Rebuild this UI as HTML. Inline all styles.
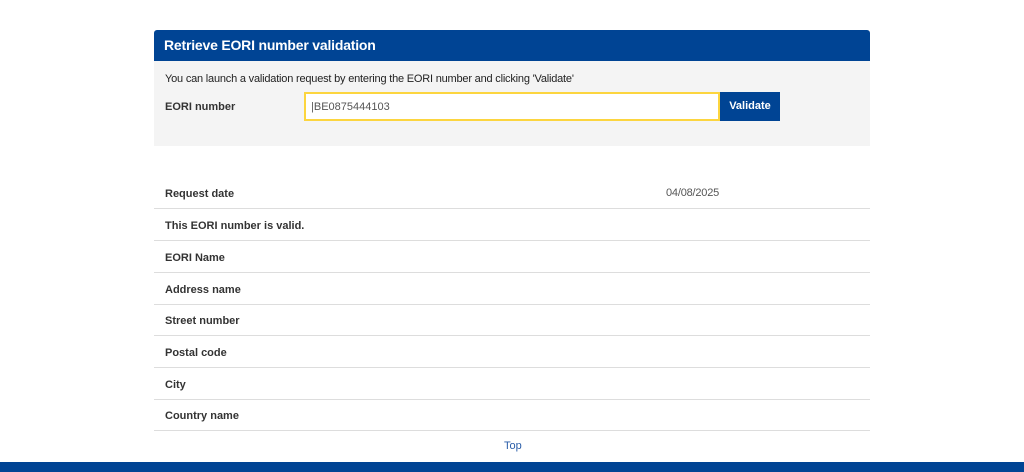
<!DOCTYPE html>
<html><head><style>
*{margin:0;padding:0;box-sizing:border-box}
body{width:1024px;height:472px;background:#fff;font-family:"Liberation Sans",Arial,sans-serif;position:relative;overflow:hidden;color:#333}
.hdr{position:absolute;left:154px;top:30px;width:716px;height:31px;background:#004494;border-radius:3px 3px 0 0;color:#fff;font-weight:bold;font-size:14px;padding:7px 0 0 10px;letter-spacing:-0.2px}
.body{position:absolute;left:154px;top:61px;width:716px;height:85px;background:#f4f4f4}
.intro{position:absolute;left:165px;top:73px;font-size:11px;color:#222;letter-spacing:-0.2px}
.lbl{position:absolute;left:165px;top:101px;font-size:11px;font-weight:bold;color:#333}
.inp{position:absolute;left:304px;top:92px;width:416px;height:29px;border:2px solid #fcd53f;background:#fff;font-size:11px;color:#555;padding:7px 0 0 5px}
.btn{position:absolute;left:720px;top:92px;width:60px;height:29px;background:#004494;color:#fff;font-weight:bold;font-size:11px;text-align:center;line-height:29px}
.row{position:absolute;left:154px;width:716px;border-bottom:1px solid #ddd;height:32px;font-size:11px;font-weight:bold;color:#333}
.row span{position:absolute;left:11px;top:11px}
.date{position:absolute;left:666px;top:187px;font-size:11px;color:#555;letter-spacing:-0.2px}
.top{position:absolute;left:504px;top:440px;font-size:11px;color:#2a5da8}
.foot{position:absolute;left:0;top:462px;width:1024px;height:10px;background:#004494}
</style></head><body>
<div class="hdr">Retrieve EORI number validation</div>
<div class="body"></div>
<div class="intro">You can launch a validation request by entering the EORI number and clicking 'Validate'</div>
<div class="lbl">EORI number</div>
<div class="inp">|BE0875444103</div>
<div class="btn">Validate</div>
<div class="row" style="top:177px"><span>Request date</span></div>
<div class="date">04/08/2025</div>
<div class="row" style="top:209px"><span>This EORI number is valid.</span></div>
<div class="row" style="top:241px"><span>EORI Name</span></div>
<div class="row" style="top:273px"><span>Address name</span></div>
<div class="row" style="top:304px"><span>Street number</span></div>
<div class="row" style="top:336px"><span>Postal code</span></div>
<div class="row" style="top:368px"><span>City</span></div>
<div class="row" style="top:399px"><span>Country name</span></div>
<div class="top">Top</div>
<div class="foot"></div>
</body></html>
